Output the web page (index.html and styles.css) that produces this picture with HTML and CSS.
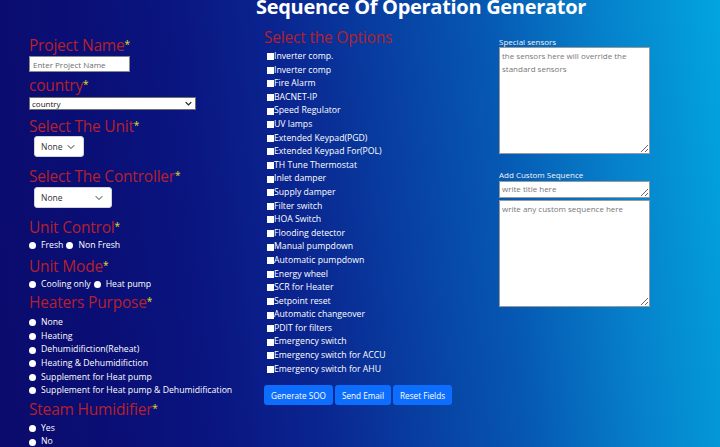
FILE: index.html
```html
<!DOCTYPE html>
<html lang="en">
<head>
<meta charset="utf-8">
<title>Sequence Of Operation Generator</title>
<link rel="stylesheet" href="styles.css">
</head>
<body>
<header class="page-header">
  <h1 class="page-title">Sequence Of Operation Generator</h1>
</header>
<main class="layout">
  <section class="col col-left">
    <h2 class="field-title t-project">Project Name<span class="req">*</span></h2>
    <input class="text-input" type="text" placeholder="Enter Project Name">

    <h2 class="field-title t-country">country<span class="req">*</span></h2>
    <div class="select-wrap country-wrap">
      <select class="native-select"><option>country</option></select>
      <svg class="chev chev-small" viewBox="0 0 10 6" width="7" height="5"><path d="M1 1l4 4 4-4" fill="none" stroke="#222" stroke-width="1.8"/></svg>
    </div>

    <h2 class="field-title t-unit">Select The Unit<span class="req">*</span></h2>
    <div class="select-wrap bs-wrap unit-wrap">
      <select class="bs-select"><option>None</option></select>
      <svg class="chev" viewBox="0 0 16 16" width="8" height="8"><path d="M2 5l6 6 6-6" fill="none" stroke="#343a40" stroke-width="2" stroke-linecap="round" stroke-linejoin="round"/></svg>
    </div>

    <h2 class="field-title t-controller">Select The Controller<span class="req">*</span></h2>
    <div class="select-wrap bs-wrap ctrl-wrap">
      <select class="bs-select"><option>None</option></select>
      <svg class="chev" viewBox="0 0 16 16" width="8" height="8"><path d="M2 5l6 6 6-6" fill="none" stroke="#343a40" stroke-width="2" stroke-linecap="round" stroke-linejoin="round"/></svg>
    </div>

    <h2 class="field-title t-control">Unit Control<span class="req">*</span></h2>
    <div class="radio-row r-control">
      <label class="radio"><input type="radio" name="ctrl"><span>Fresh</span></label>
      <label class="radio"><input type="radio" name="ctrl"><span>Non Fresh</span></label>
    </div>

    <h2 class="field-title t-mode">Unit Mode<span class="req">*</span></h2>
    <div class="radio-row r-mode">
      <label class="radio"><input type="radio" name="mode"><span>Cooling only</span></label>
      <label class="radio"><input type="radio" name="mode"><span>Heat pump</span></label>
    </div>

    <h2 class="field-title t-heaters">Heaters Purpose<span class="req">*</span></h2>
    <div class="radio-list r-heaters">
      <label class="radio"><input type="radio" name="heat"><span>None</span></label>
      <label class="radio"><input type="radio" name="heat"><span>Heating</span></label>
      <label class="radio"><input type="radio" name="heat"><span>Dehumidifiction(Reheat)</span></label>
      <label class="radio"><input type="radio" name="heat"><span>Heating &amp; Dehumidifiction</span></label>
      <label class="radio"><input type="radio" name="heat"><span>Supplement for Heat pump</span></label>
      <label class="radio"><input type="radio" name="heat"><span>Supplement for Heat pump &amp; Dehumidification</span></label>
    </div>

    <h2 class="field-title t-steam">Steam Humidifier<span class="req">*</span></h2>
    <div class="radio-list r-steam">
      <label class="radio"><input type="radio" name="steam"><span>Yes</span></label>
      <label class="radio"><input type="radio" name="steam"><span>No</span></label>
    </div>
  </section>

  <section class="col col-mid">
    <h2 class="field-title t-options">Select the Options</h2>
    <ul class="check-list">
      <li><label class="check"><input type="checkbox"><span>Inverter comp.</span></label></li>
      <li><label class="check"><input type="checkbox"><span>Inverter comp</span></label></li>
      <li><label class="check"><input type="checkbox"><span>Fire Alarm</span></label></li>
      <li><label class="check"><input type="checkbox"><span>BACNET-IP</span></label></li>
      <li><label class="check"><input type="checkbox"><span>Speed Regulator</span></label></li>
      <li><label class="check"><input type="checkbox"><span>UV lamps</span></label></li>
      <li><label class="check"><input type="checkbox"><span>Extended Keypad(PGD)</span></label></li>
      <li><label class="check"><input type="checkbox"><span>Extended Keypad For(POL)</span></label></li>
      <li><label class="check"><input type="checkbox"><span>TH Tune Thermostat</span></label></li>
      <li><label class="check"><input type="checkbox"><span>Inlet damper</span></label></li>
      <li><label class="check"><input type="checkbox"><span>Supply damper</span></label></li>
      <li><label class="check"><input type="checkbox"><span>Filter switch</span></label></li>
      <li><label class="check"><input type="checkbox"><span>HOA Switch</span></label></li>
      <li><label class="check"><input type="checkbox"><span>Flooding detector</span></label></li>
      <li><label class="check"><input type="checkbox"><span>Manual pumpdown</span></label></li>
      <li><label class="check"><input type="checkbox"><span>Automatic pumpdown</span></label></li>
      <li><label class="check"><input type="checkbox"><span>Energy wheel</span></label></li>
      <li><label class="check"><input type="checkbox"><span>SCR for Heater</span></label></li>
      <li><label class="check"><input type="checkbox"><span>Setpoint reset</span></label></li>
      <li><label class="check"><input type="checkbox"><span>Automatic changeover</span></label></li>
      <li><label class="check"><input type="checkbox"><span>PDIT for filters</span></label></li>
      <li><label class="check"><input type="checkbox"><span>Emergency switch</span></label></li>
      <li><label class="check"><input type="checkbox"><span>Emergency switch for ACCU</span></label></li>
      <li><label class="check"><input type="checkbox"><span>Emergency switch for AHU</span></label></li>
    </ul>
    <div class="btn-row">
      <button class="btn" type="button">Generate SOO</button>
      <button class="btn" type="button">Send Email</button>
      <button class="btn" type="button">Reset Fields</button>
    </div>
  </section>

  <section class="col col-right">
    <label class="side-label l-sensors">Special sensors</label>
    <textarea class="area area-sensors" placeholder="the sensors here will override the standard sensors"></textarea>
    <label class="side-label l-custom">Add Custom Sequence</label>
    <textarea class="area area-title" placeholder="write title here"></textarea>
    <textarea class="area area-seq" placeholder="write any custom sequence here"></textarea>
  </section>
</main>
</body>
</html>
```

FILE: styles.css
```css
* { box-sizing: border-box; }
html, body { margin: 0; padding: 0; }
body {
  width: 720px;
  height: 447px;
  overflow: hidden;
  font-family: "Open Sans", "Noto Sans", sans-serif;
  color: #fff;
  background: linear-gradient(84deg, #0b0b6c 0%, #0a0e74 14%, #0a1580 28%, #0a2590 42%, #0840a2 56%, #0658b2 69%, #0680ca 84%, #02a5e0 100%);
}
.page-header {
  display: flex;
  justify-content: center;
  height: 16px;
  padding-left: 122px;
}
.page-title {
  margin: -3px 0 0 0;
  font-size: 20px;
  font-weight: 700;
  line-height: 20px;
  letter-spacing: -0.3px;
  white-space: nowrap;
}
.layout {
  display: grid;
  grid-template-columns: 235px 235px 1fr;
  padding-left: 29px;
}
.col { display: flex; flex-direction: column; align-items: flex-start; }
.field-title {
  margin: 0;
  font-weight: 400;
  font-size: 15.5px;
  line-height: 20px;
  letter-spacing: -0.2px;
  color: #b5202c;
}
.req { color: #e6e01a; font-size: 10px; vertical-align: 3px; letter-spacing: 0; }

.t-project { margin-top: 18px; }
.text-input {
  margin-top: 1px;
  width: 101px;
  height: 16px;
  border: 1px solid #8a8a8a;
  padding: 0 3px;
  font-family: inherit;
  font-size: 8px;
  background: #fff;
}
.text-input::placeholder { color: #6c6c6c; }
.t-country { margin-top: 2px; }
.select-wrap { position: relative; }
.native-select {
  appearance: none;
  display: block;
  width: 167px;
  height: 13px;
  margin-top: 2px;
  border: 1px solid #707070;
  background: #fff;
  font-family: inherit;
  font-size: 8px;
  line-height: 11px;
  padding: 0 2px;
  color: #111;
}
.chev { position: absolute; pointer-events: none; }
.chev-small { right: 4px; top: 6px; }
.t-unit { margin-top: 5px; }
.bs-wrap { margin-left: 5px; }
.bs-select {
  appearance: none;
  display: block;
  height: 21px;
  border: 1px solid #ced4da;
  border-radius: 3px;
  background: #fff;
  font-family: inherit;
  font-size: 8.5px;
  color: #333;
  padding: 0 0 0 6px;
}
.unit-wrap .bs-select { width: 50px; }
.ctrl-wrap { margin-top: 1px; }
.ctrl-wrap .bs-select { width: 78px; }
.bs-wrap .chev { top: 7px; right: 9px; }
.t-controller { margin-top: 8px; }
.t-control { margin-top: 8px; }
.radio-row { display: flex; gap: 3px; margin-top: 2px; }
.radio {
  display: flex;
  align-items: center;
  font-size: 8.7px;
  line-height: 13.6px;
  height: 13.6px;
}
.radio input {
  appearance: none;
  margin: 0 5px 0 0;
  width: 7px;
  height: 7px;
  border-radius: 50%;
  background: #fff;
  border: none;
}
.t-mode { margin-top: 2px; }
.t-heaters { margin-top: 0; }
.radio-list { display: flex; flex-direction: column; }
.r-heaters { margin-top: 4px; }
.t-steam { margin-top: 0; }
.r-steam { margin-top: 3px; }

/* middle */
.t-options { margin-top: 11px; }
.check-list { list-style: none; margin: 3px 0 0 0; padding: 0 0 0 3px; }
.check {
  display: flex;
  align-items: center;
  font-size: 8.7px;
  line-height: 13.6px;
  height: 13.6px;
}
.check input {
  appearance: none;
  margin: 0;
  width: 7px;
  height: 7px;
  background: #fff;
  border: none;
  border-radius: 0;
}
.btn-row { display: flex; gap: 2px; margin-top: 9px; }
.btn {
  height: 20px;
  border: none;
  border-radius: 3px;
  background: #0d6efd;
  color: #fff;
  font-family: inherit;
  font-size: 8.2px;
  padding: 0 7px;
}

/* right */
.side-label { font-size: 8px; line-height: 10px; color: #f4f4f4; }
.l-sensors { margin-top: 21px; }
.area {
  display: block;
  width: 151px;
  border: 1px solid #9a9a9a;
  background: #fff;
  font-family: inherit;
  font-size: 8px;
  line-height: 13px;
  padding: 1px 2px;
  resize: both;
}
.area::placeholder { color: #777; }
.area-sensors { height: 107px; }
.l-custom { margin-top: 16px; }
.area-title { height: 17px; margin-top: 1px; padding-top: 0; }
.area-seq { height: 107px; margin-top: 2px; }
```
